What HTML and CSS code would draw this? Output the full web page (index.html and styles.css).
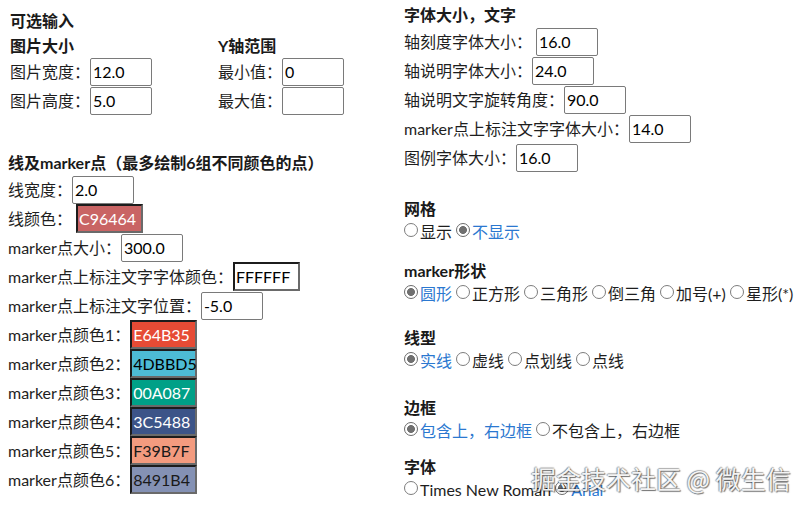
FILE: index.html
```html
<!DOCTYPE html>
<html lang="zh-CN">
<head>
<meta charset="utf-8">
<title>绘图参数</title>
<link rel="stylesheet" href="styles.css">
</head>
<body>
<div class="page">
  <div class="col left">
    <div class="h h-top">可选输入</div>
    <div class="pair">
      <div class="sub">
        <div class="h">图片大小</div>
        <div class="row"><span>图片宽度：</span><input class="inp" type="text" value="12.0"></div>
        <div class="row"><span>图片高度：</span><input class="inp" type="text" value="5.0"></div>
      </div>
      <div class="sub sub-y">
        <div class="h">Y轴范围</div>
        <div class="row"><span>最小值：</span><input class="inp" type="text" value="0"></div>
        <div class="row"><span>最大值：</span><input class="inp" type="text" value=""></div>
      </div>
    </div>
    <div class="h h-line">线及marker点（最多绘制6组不同颜色的点）</div>
    <div class="row"><span>线宽度：</span><input class="inp" type="text" value="2.0"></div>
    <div class="row"><span>线颜色：</span><div class="sw sw-gap c-c96464">C96464</div></div>
    <div class="row"><span>marker点大小：</span><input class="inp" type="text" value="300.0"></div>
    <div class="row"><span>marker点上标注文字字体颜色：</span><div class="sw c-ffffff">FFFFFF</div></div>
    <div class="row"><span>marker点上标注文字位置：</span><input class="inp" type="text" value="-5.0"></div>
    <div class="row"><span>marker点颜色1：</span><div class="sw c-e64b35">E64B35</div></div>
    <div class="row"><span>marker点颜色2：</span><div class="sw c-4dbbd5">4DBBD5</div></div>
    <div class="row"><span>marker点颜色3：</span><div class="sw c-00a087">00A087</div></div>
    <div class="row"><span>marker点颜色4：</span><div class="sw c-3c5488">3C5488</div></div>
    <div class="row"><span>marker点颜色5：</span><div class="sw c-f39b7f">F39B7F</div></div>
    <div class="row"><span>marker点颜色6：</span><div class="sw c-8491b4">8491B4</div></div>
  </div>

  <div class="col right">
    <div class="h h-font">字体大小，文字</div>
    <div class="row"><span>轴刻度字体大小：</span><input class="inp inp-gap" type="text" value="16.0"></div>
    <div class="row"><span>轴说明字体大小：</span><input class="inp" type="text" value="24.0"></div>
    <div class="row"><span>轴说明文字旋转角度：</span><input class="inp" type="text" value="90.0"></div>
    <div class="row"><span>marker点上标注文字字体大小：</span><input class="inp" type="text" value="14.0"></div>
    <div class="row"><span>图例字体大小：</span><input class="inp" type="text" value="16.0"></div>

    <div class="grp g-grid">
      <div class="h">网格</div>
      <div class="radios">
        <span class="opt"><span class="radio"></span>显示</span>
        <span class="opt on"><span class="radio"></span>不显示</span>
      </div>
    </div>
    <div class="grp g-marker">
      <div class="h">marker形状</div>
      <div class="radios">
        <span class="opt on"><span class="radio"></span>圆形</span>
        <span class="opt"><span class="radio"></span>正方形</span>
        <span class="opt"><span class="radio"></span>三角形</span>
        <span class="opt"><span class="radio"></span>倒三角</span>
        <span class="opt"><span class="radio"></span>加号(+)</span>
        <span class="opt"><span class="radio"></span>星形(*)</span>
      </div>
    </div>
    <div class="grp g-line">
      <div class="h">线型</div>
      <div class="radios">
        <span class="opt on"><span class="radio"></span>实线</span>
        <span class="opt"><span class="radio"></span>虚线</span>
        <span class="opt"><span class="radio"></span>点划线</span>
        <span class="opt"><span class="radio"></span>点线</span>
      </div>
    </div>
    <div class="grp g-frame">
      <div class="h">边框</div>
      <div class="radios">
        <span class="opt on"><span class="radio"></span>包含上，右边框</span>
        <span class="opt"><span class="radio"></span>不包含上，右边框</span>
      </div>
    </div>
    <div class="grp g-font">
      <div class="h">字体</div>
      <div class="radios">
        <span class="opt"><span class="radio"></span>Times New Roman</span>
        <span class="opt on"><span class="radio"></span>Arial</span>
      </div>
    </div>
  </div>
</div>
<div class="watermark">掘金技术社区 @ 微生信</div>
</body>
</html>
```

FILE: styles.css
```css
html, body {
  margin: 0;
  padding: 0;
  background: #ffffff;
}
body {
  font-family: Lato, "Noto Sans CJK SC", sans-serif;
  font-size: 16px;
  line-height: 22px;
  color: #1e1e1e;
  width: 809px;
  height: 506px;
  overflow: hidden;
  position: relative;
}
.page {
  display: flex;
}
.col.left {
  flex: 0 0 396px;
  padding-left: 8px;
}
.col.right {
  flex: 1;
}
.h {
  font-weight: 700;
  height: 22px;
  color: #1a1a1a;
}
.h-top {
  margin-top: 10px;
  padding-left: 2px;
}
.pair {
  display: flex;
  margin-top: 3px;
  padding-left: 2px;
}
.sub {
  flex: 0 0 208px;
}
.sub-y {
  flex: 1 1 auto;
}
.h-line {
  margin-top: 37px;
  margin-bottom: 1px;
}
.h-font {
  margin-top: 4px;
  margin-bottom: 1px;
}
.row {
  display: flex;
  align-items: center;
  height: 29px;
  white-space: nowrap;
}
.inp {
  box-sizing: border-box;
  width: 62px;
  height: 28px;
  margin: 0;
  padding: 0 2px;
  border: 1px solid #7a7a7a;
  border-radius: 2px;
  font: inherit;
  color: #000;
  background: #fff;
  outline: none;
}
.inp-gap {
  margin-left: 4px;
}
.sw {
  box-sizing: border-box;
  width: 67px;
  height: 29px;
  padding-left: 1px;
  line-height: 25px;
  border-style: solid;
  border-width: 2px;
  border-color: #1c1c1c #6a6a6a #6a6a6a #1c1c1c;
}
.sw-gap {
  margin-left: 4px;
}
.c-c96464 { background: #c96464; color: #ffffff; }
.c-ffffff { background: #ffffff; color: #000000; }
.c-e64b35 { background: #e64b35; color: #ffffff; }
.c-4dbbd5 { background: #4dbbd5; color: #000000; }
.c-00a087 { background: #00a087; color: #ffffff; }
.c-3c5488 { background: #3c5488; color: #ffffff; }
.c-f39b7f { background: #f39b7f; color: #1a1a1a; }
.c-8491b4 { background: #8491b4; color: #1a1a1a; }

.grp .h {
  height: 22px;
}
.g-grid { margin-top: 26px; }
.g-marker { margin-top: 16px; }
.g-line { margin-top: 21px; }
.g-frame { margin-top: 24px; }
.g-font { margin-top: 13px; }
.radios {
  display: flex;
  align-items: center;
  height: 24px;
  gap: 4px;
  white-space: nowrap;
}
.opt {
  display: inline-flex;
  align-items: center;
}
.radio {
  box-sizing: border-box;
  width: 14px;
  height: 14px;
  margin-right: 2px;
  border-radius: 50%;
  border: 1px solid #7d7d7d;
  background: #fff;
  position: relative;
  top: -2px;
}
.opt.on {
  color: #2b78d0;
}
.opt.on .radio {
  border: 1.5px solid #6b6b6b;
  background: radial-gradient(circle, #707070 0 3.6px, #ffffff 4.3px);
}
.watermark {
  position: absolute;
  left: 531px;
  top: 460px;
  font-family: "Noto Sans CJK SC", sans-serif;
  font-size: 25px;
  line-height: 36px;
  color: #f3f3f3;
  white-space: nowrap;
  text-shadow: 1px 1px 1px rgba(0,0,0,0.55), -1px 0 1px rgba(0,0,0,0.35), 0 -1px 1px rgba(0,0,0,0.3);
}
```
